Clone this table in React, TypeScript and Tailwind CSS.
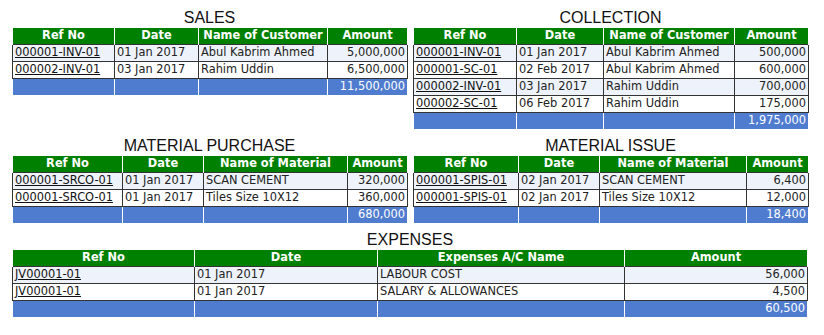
type Row = { ref: string; date: string; name: string; amount: string };

type Section = {
  title: string;
  nameHead: string;
  cols: number[];
  rows: Row[];
  total: string;
};

const sales: Section = {
  title: "SALES",
  nameHead: "Name of Customer",
  cols: [102, 84, 129, 80],
  rows: [
    { ref: "000001-INV-01", date: "01 Jan 2017", name: "Abul Kabrim Ahmed", amount: "5,000,000" },
    { ref: "000002-INV-01", date: "03 Jan 2017", name: "Rahim Uddin", amount: "6,500,000" },
  ],
  total: "11,500,000",
};

const collection: Section = {
  title: "COLLECTION",
  nameHead: "Name of Customer",
  cols: [103, 87, 131, 74],
  rows: [
    { ref: "000001-INV-01", date: "01 Jan 2017", name: "Abul Kabrim Ahmed", amount: "500,000" },
    { ref: "000001-SC-01", date: "02 Feb 2017", name: "Abul Kabrim Ahmed", amount: "600,000" },
    { ref: "000002-INV-01", date: "03 Jan 2017", name: "Rahim Uddin", amount: "700,000" },
    { ref: "000002-SC-01", date: "06 Feb 2017", name: "Rahim Uddin", amount: "175,000" },
  ],
  total: "1,975,000",
};

const purchase: Section = {
  title: "MATERIAL PURCHASE",
  nameHead: "Name of Material",
  cols: [110, 81, 144, 60],
  rows: [
    { ref: "000001-SRCO-01", date: "01 Jan 2017", name: "SCAN CEMENT", amount: "320,000" },
    { ref: "000001-SRCO-01", date: "01 Jan 2017", name: "Tiles Size 10X12", amount: "360,000" },
  ],
  total: "680,000",
};

const issue: Section = {
  title: "MATERIAL ISSUE",
  nameHead: "Name of Material",
  cols: [105, 81, 147, 62],
  rows: [
    { ref: "000001-SPIS-01", date: "02 Jan 2017", name: "SCAN CEMENT", amount: "6,400" },
    { ref: "000001-SPIS-01", date: "02 Jan 2017", name: "Tiles Size 10X12", amount: "12,000" },
  ],
  total: "18,400",
};

const expenses: Section = {
  title: "EXPENSES",
  nameHead: "Expenses A/C Name",
  cols: [182, 183, 247, 183],
  rows: [
    { ref: "JV00001-01", date: "01 Jan 2017", name: "LABOUR COST", amount: "56,000" },
    { ref: "JV00001-01", date: "01 Jan 2017", name: "SALARY & ALLOWANCES", amount: "4,500" },
  ],
  total: "60,500",
};

function ReportTable({ s }: { s: Section }) {
  const td = "h-[17px] border border-[#333] px-[2px] py-0 leading-[15px] whitespace-nowrap";
  return (
    <div>
      <div className="h-[21px] text-center font-['Liberation_Sans',Arial,sans-serif] text-[16px] leading-[22px] text-[#111]">
        {s.title}
      </div>
      <table className="w-full table-fixed border-collapse font-['DejaVu_Sans',Verdana,sans-serif] text-[11.4px] text-[#222]">
        <colgroup>
          {s.cols.map((w, i) => (
            <col key={i} style={{ width: w }} />
          ))}
        </colgroup>
        <thead>
          <tr className="h-[16px] bg-[#008000] text-white">
            <th className="border-x border-white p-0 leading-[15px] font-bold">Ref No</th>
            <th className="border-x border-white p-0 leading-[15px] font-bold">Date</th>
            <th className="border-x border-white p-0 leading-[15px] font-bold">{s.nameHead}</th>
            <th className="border-x border-white p-0 leading-[15px] font-bold">Amount</th>
          </tr>
        </thead>
        <tbody>
          {s.rows.map((r, i) => (
            <tr key={i} className={i % 2 === 0 ? "bg-[#eef2fa]" : "bg-white"}>
              <td className={td}>
                <a href="#" className="text-[#111] underline">
                  {r.ref}
                </a>
              </td>
              <td className={td}>{r.date}</td>
              <td className={td}>{r.name}</td>
              <td className={td + " text-right"}>{r.amount}</td>
            </tr>
          ))}
          <tr className="h-[17px] bg-[#4f7ccf] text-white">
            <td className="border-x border-white p-0" />
            <td className="border-x border-white p-0" />
            <td className="border-x border-white p-0" />
            <td className="border-x border-white px-[2px] py-0 text-right leading-[15px]">{s.total}</td>
          </tr>
        </tbody>
      </table>
    </div>
  );
}

export default function App() {
  return (
    <div className="h-[335px] w-[824px] bg-white pt-[7px]">
      <div className="ml-[12px] flex w-[796px] flex-col gap-[6px]">
        <div className="grid grid-cols-2 items-start gap-[6px]">
          <ReportTable s={sales} />
          <ReportTable s={collection} />
        </div>
        <div className="grid grid-cols-2 items-start gap-[6px]">
          <ReportTable s={purchase} />
          <ReportTable s={issue} />
        </div>
        <ReportTable s={expenses} />
      </div>
    </div>
  );
}
